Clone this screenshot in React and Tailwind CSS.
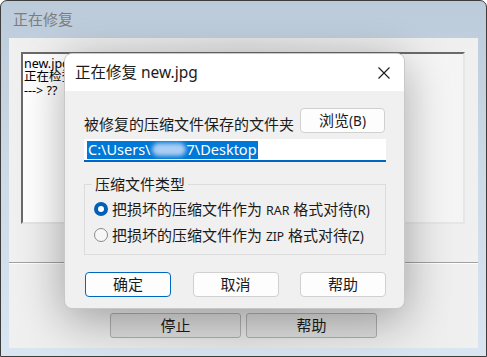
import { useState } from "react";

const FONT = { fontFamily: '"Noto Sans", "Noto Sans CJK SC", sans-serif' };

function WinButton({ children, primary, className = "" }) {
  return (
    <button
      className={`h-[25px] rounded-[4px] border text-[15px] leading-none text-[#1b1b1b] ${
        primary ? "border-[#0067c0] bg-[#fdfdfd]" : "border-[#d0d0d0] bg-[#fdfdfd]"
      } ${className}`}
    >
      {children}
    </button>
  );
}

function Radio({ checked, onClick, children }) {
  return (
    <div className="flex h-[26px] items-center cursor-default" onClick={onClick}>
      {checked ? (
        <span className="ml-[9px] flex h-[14px] w-[14px] items-center justify-center rounded-full bg-[#005fb8]">
          <span className="h-[6px] w-[6px] rounded-full bg-white" />
        </span>
      ) : (
        <span className="ml-[9px] h-[14px] w-[14px] rounded-full border border-[#8a8a8a] bg-[#f7f7f7]" />
      )}
      <span className="ml-[4px] text-[15px] text-[#1b1b1b]">{children}</span>
    </div>
  );
}

export default function App() {
  const [format, setFormat] = useState("rar");

  return (
    <div className="relative h-[357px] w-[487px] overflow-hidden bg-white" style={FONT}>
      {/* background window */}
      <div className="flex h-[357px] flex-col rounded-t-[7px] border border-[#3d3d3d] bg-gradient-to-b from-[#bccbda] via-[#cddae7] to-[#d9e5f1]">
        <div className="flex h-[37px] items-center px-[12px] text-[15px] text-[#7d7d7d]">正在修复</div>
        <div className="mx-[8px] mb-[8px] flex flex-1 flex-col bg-gradient-to-r from-[#f0f0f0] via-[#e4e4e4] to-[#f0f0f0]">
          {/* log box */}
          <div className="ml-[12px] mt-[14px] h-[172px] w-[444px] border-2 border-t-[#6a6a6a] border-l-[#6a6a6a] border-r-[#e6e6e6] border-b-[#e6e6e6] bg-gradient-to-r from-white via-white to-[#f4f4f4] px-[1px] pt-[3px] text-[12.5px] text-black">
            <div className="h-[13px] leading-[13px]">new.jpg</div>
            <div className="h-[14px] leading-[14px]">正在检查</div>
            <div className="h-[14px] leading-[14px]">---&gt; ??</div>
          </div>
          <div className="mt-[38px] h-[2px] border-t border-b border-t-[#a0a0a0] border-b-white" />
          <div className="ml-[101px] mt-[49px] flex gap-[5px]">
            <button className="h-[25px] w-[131px] rounded-[3px] border border-[#adadad] bg-[#dcdcdc] text-[15px] text-[#1b1b1b]">停止</button>
            <button className="h-[25px] w-[131px] rounded-[3px] border border-[#adadad] bg-[#dcdcdc] text-[15px] text-[#1b1b1b]">帮助</button>
          </div>
        </div>
      </div>

      {/* modal dialog */}
      <div className="absolute left-[64px] top-[53px] flex h-[256px] w-[341px] flex-col overflow-hidden rounded-[8px] border border-[#c8c8c8] bg-[#f0f0f0] shadow-[0_10px_45px_rgba(0,0,0,0.33)]">
        <div className="flex h-[37px] items-center justify-between bg-white pl-[10px] pr-[14px]">
          <span className="text-[15.5px] text-[#1b1b1b]">正在修复 new.jpg</span>
          <svg width="12" height="12" viewBox="0 0 12 12" className="mt-[1px]">
            <path d="M0.5 0.5L11.5 11.5M11.5 0.5L0.5 11.5" stroke="#1b1b1b" strokeWidth="1.1" />
          </svg>
        </div>

        <div className="flex flex-col px-[19px] pt-[17px]">
          <div className="flex items-end justify-between">
            <span className="mb-[-2px] text-[15px] text-[#1b1b1b]">被修复的压缩文件保存的文件夹</span>
            <WinButton className="w-[85px]">
              浏览<span className="text-[13.5px]">(B)</span>
            </WinButton>
          </div>

          <div className="mt-[6px] flex h-[23px] w-[302px] items-center border-b-2 border-[#0067c0] bg-white pl-[3px]">
            <span className="flex h-[18px] items-center bg-[#0078d7] px-[1px] text-[14.5px] text-white">
              C:\Users\
              <span className="mx-[1px] inline-block h-[13px] w-[34px] rounded-full bg-[#a9cdf3] blur-[2px]" />
              7\Desktop
            </span>
          </div>

          <fieldset className="mt-[12px] h-[81px] w-[302px] border border-[#dcdcdc] px-0 pb-0">
            <legend className="ml-[7px] px-[3px] text-[15px] leading-[20px] text-[#1b1b1b]">压缩文件类型</legend>
            <div className="mt-[2px]">
              <Radio checked={format === "rar"} onClick={() => setFormat("rar")}>
                把损坏的压缩文件作为 <span className="text-[12.5px]">RAR</span> 格式对待<span className="text-[13.5px]">(R)</span>
              </Radio>
              <Radio checked={format === "zip"} onClick={() => setFormat("zip")}>
                把损坏的压缩文件作为 <span className="text-[12px]">ZIP</span> 格式对待<span className="text-[13.5px]">(Z)</span>
              </Radio>
            </div>
          </fieldset>

          <div className="mt-[17px] flex w-[302px] justify-between">
            <WinButton primary className="ml-[1px] w-[86px]">确定</WinButton>
            <WinButton className="w-[86px]">取消</WinButton>
            <WinButton className="w-[86px]">帮助</WinButton>
          </div>
        </div>
      </div>
    </div>
  );
}
